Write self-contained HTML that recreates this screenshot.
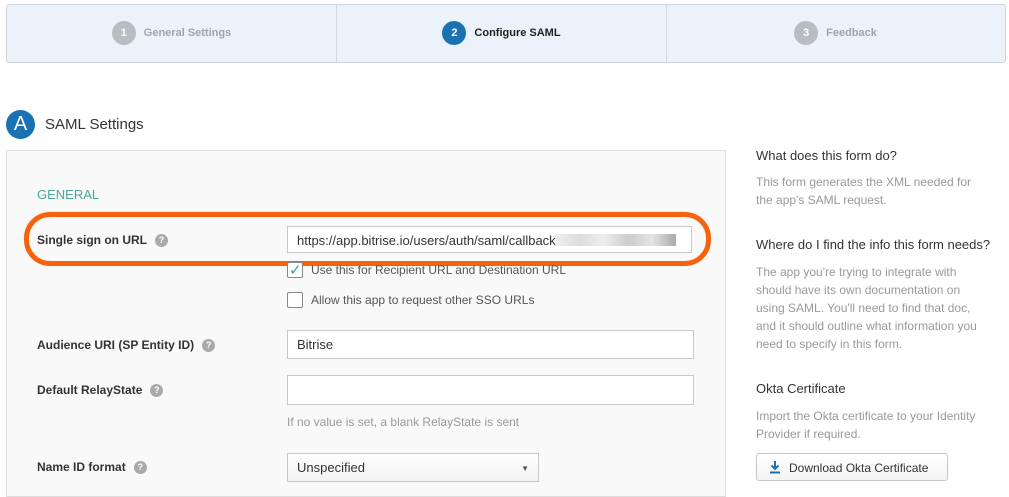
<!DOCTYPE html>
<html><head><style>
body{margin:0;width:1009px;height:489px;overflow:hidden;background:#fff;font-family:"Liberation Sans",sans-serif;position:relative}
.a{position:absolute}
.step{position:absolute;top:5px;height:56px;display:flex;align-items:center;justify-content:center;font-size:11px;font-weight:bold;color:#a0a5ab}
.num{width:24px;height:24px;border-radius:50%;background:#b8bdc2;color:#fff;font-size:11px;display:flex;align-items:center;justify-content:center;margin-right:8px}
.lbl{font-size:12px;font-weight:bold;color:#333}
.q{display:inline-block;width:13px;height:13px;border-radius:50%;background:#aaa;color:#fff;font-size:9px;text-align:center;line-height:13px;margin-left:8px;vertical-align:1px}
.inp{position:absolute;background:#fff;border:1px solid #c8c8c8;height:27px;box-sizing:border-box;font-size:13px;color:#333;padding:7px 9px;line-height:12px}
.cb{position:absolute;width:14px;height:14px;border:1px solid #888;background:#fff;border-radius:2px}
.t{position:absolute;font-size:12px;color:#555}
.rh{position:absolute;left:756px;font-size:13px;color:#333}
.rp{position:absolute;left:756px;font-size:12px;color:#999;line-height:18px;width:250px}
</style></head><body>
<div class="a" style="left:6px;top:4px;width:998px;height:57px;background:#ebf2fa;border:1px solid #cfd6dd;border-radius:3px"></div>
<div class="a" style="left:336px;top:5px;width:1px;height:57px;background:#d3dae1"></div>
<div class="a" style="left:666px;top:5px;width:1px;height:57px;background:#d3dae1"></div>
<div class="step" style="left:7px;width:329px"><span class="num">1</span>General Settings</div>
<div class="step" style="left:337px;width:329px;color:#222"><span class="num" style="background:#1a72b3">2</span>Configure SAML</div>
<div class="step" style="left:667px;width:337px"><span class="num">3</span>Feedback</div>

<div class="a" style="left:6px;top:110px;width:29px;height:29px;border-radius:50%;background:#1a72b3;color:#fff;font-size:20px;text-align:center;line-height:29px">A</div>
<div class="a" style="left:45px;top:116px;font-size:15px;color:#333">SAML Settings</div>

<div class="a" style="left:6px;top:150px;width:718px;height:345px;background:#f9f9f9;border:1px solid #ddd"></div>
<div class="a" style="left:37px;top:187px;font-size:13px;color:#4aa89a">GENERAL</div>

<div class="lbl a" style="left:37px;top:233px">Single sign on URL<span class="q">?</span></div>
<div class="inp" style="left:287px;top:226px;width:405px">https://app.bitrise.io/users/auth/saml/callback<span style="display:inline-block;width:120px;height:12px;background:linear-gradient(90deg,#eee,#ddd,#eee,#ccc,#e4e4e4,#aaa);vertical-align:-1px"></span></div>
<div class="a" style="left:24px;top:212px;width:677px;height:44px;border:5px solid #f8620d;border-radius:26px"></div>

<div class="cb" style="left:287px;top:262px"></div>
<div class="a" style="left:289px;top:261px;color:#3aa58e;font-size:15px">✓</div>
<div class="t" style="left:311px;top:263px">Use this for Recipient URL and Destination URL</div>
<div class="cb" style="left:287px;top:292px"></div>
<div class="t" style="left:311px;top:293px">Allow this app to request other SSO URLs</div>

<div class="lbl a" style="left:37px;top:338px">Audience URI (SP Entity ID)<span class="q">?</span></div>
<div class="inp" style="left:287px;top:330px;width:407px;height:29px;padding-top:8px">Bitrise</div>

<div class="lbl a" style="left:37px;top:383px">Default RelayState<span class="q">?</span></div>
<div class="inp" style="left:287px;top:375px;width:407px;height:30px"></div>
<div class="t" style="left:287px;top:415px;color:#999">If no value is set, a blank RelayState is sent</div>

<div class="lbl a" style="left:37px;top:460px">Name ID format<span class="q">?</span></div>
<div class="inp" style="left:287px;top:453px;width:252px;height:29px;padding-top:8px;background:linear-gradient(#fff,#f2f2f2)">Unspecified<span style="position:absolute;right:9px;top:9px;font-size:8px;color:#555">▼</span></div>

<div class="rh" style="top:148px">What does this form do?</div>
<div class="rp" style="top:173px">This form generates the XML needed for<br>the app's SAML request.</div>
<div class="rh" style="top:237px">Where do I find the info this form needs?</div>
<div class="rp" style="top:263px">The app you're trying to integrate with<br>should have its own documentation on<br>using SAML. You'll need to find that doc,<br>and it should outline what information you<br>need to specify in this form.</div>
<div class="rh" style="top:381px">Okta Certificate</div>
<div class="rp" style="top:407px">Import the Okta certificate to your Identity<br>Provider if required.</div>
<div class="a" style="left:756px;top:453px;width:192px;height:28px;border:1px solid #c8c8c8;border-radius:3px;background:linear-gradient(#fff,#f4f4f4);font-size:12px;color:#333;line-height:28px;box-sizing:border-box;padding-left:32px">Download Okta Certificate
<svg style="position:absolute;left:11px;top:6px" width="14" height="14" viewBox="0 0 14 14"><path d="M7 1v8M3.5 5.5L7 9l3.5-3.5M2 12.5h10" stroke="#1a72b3" stroke-width="2" fill="none"/></svg></div>
</body></html>
